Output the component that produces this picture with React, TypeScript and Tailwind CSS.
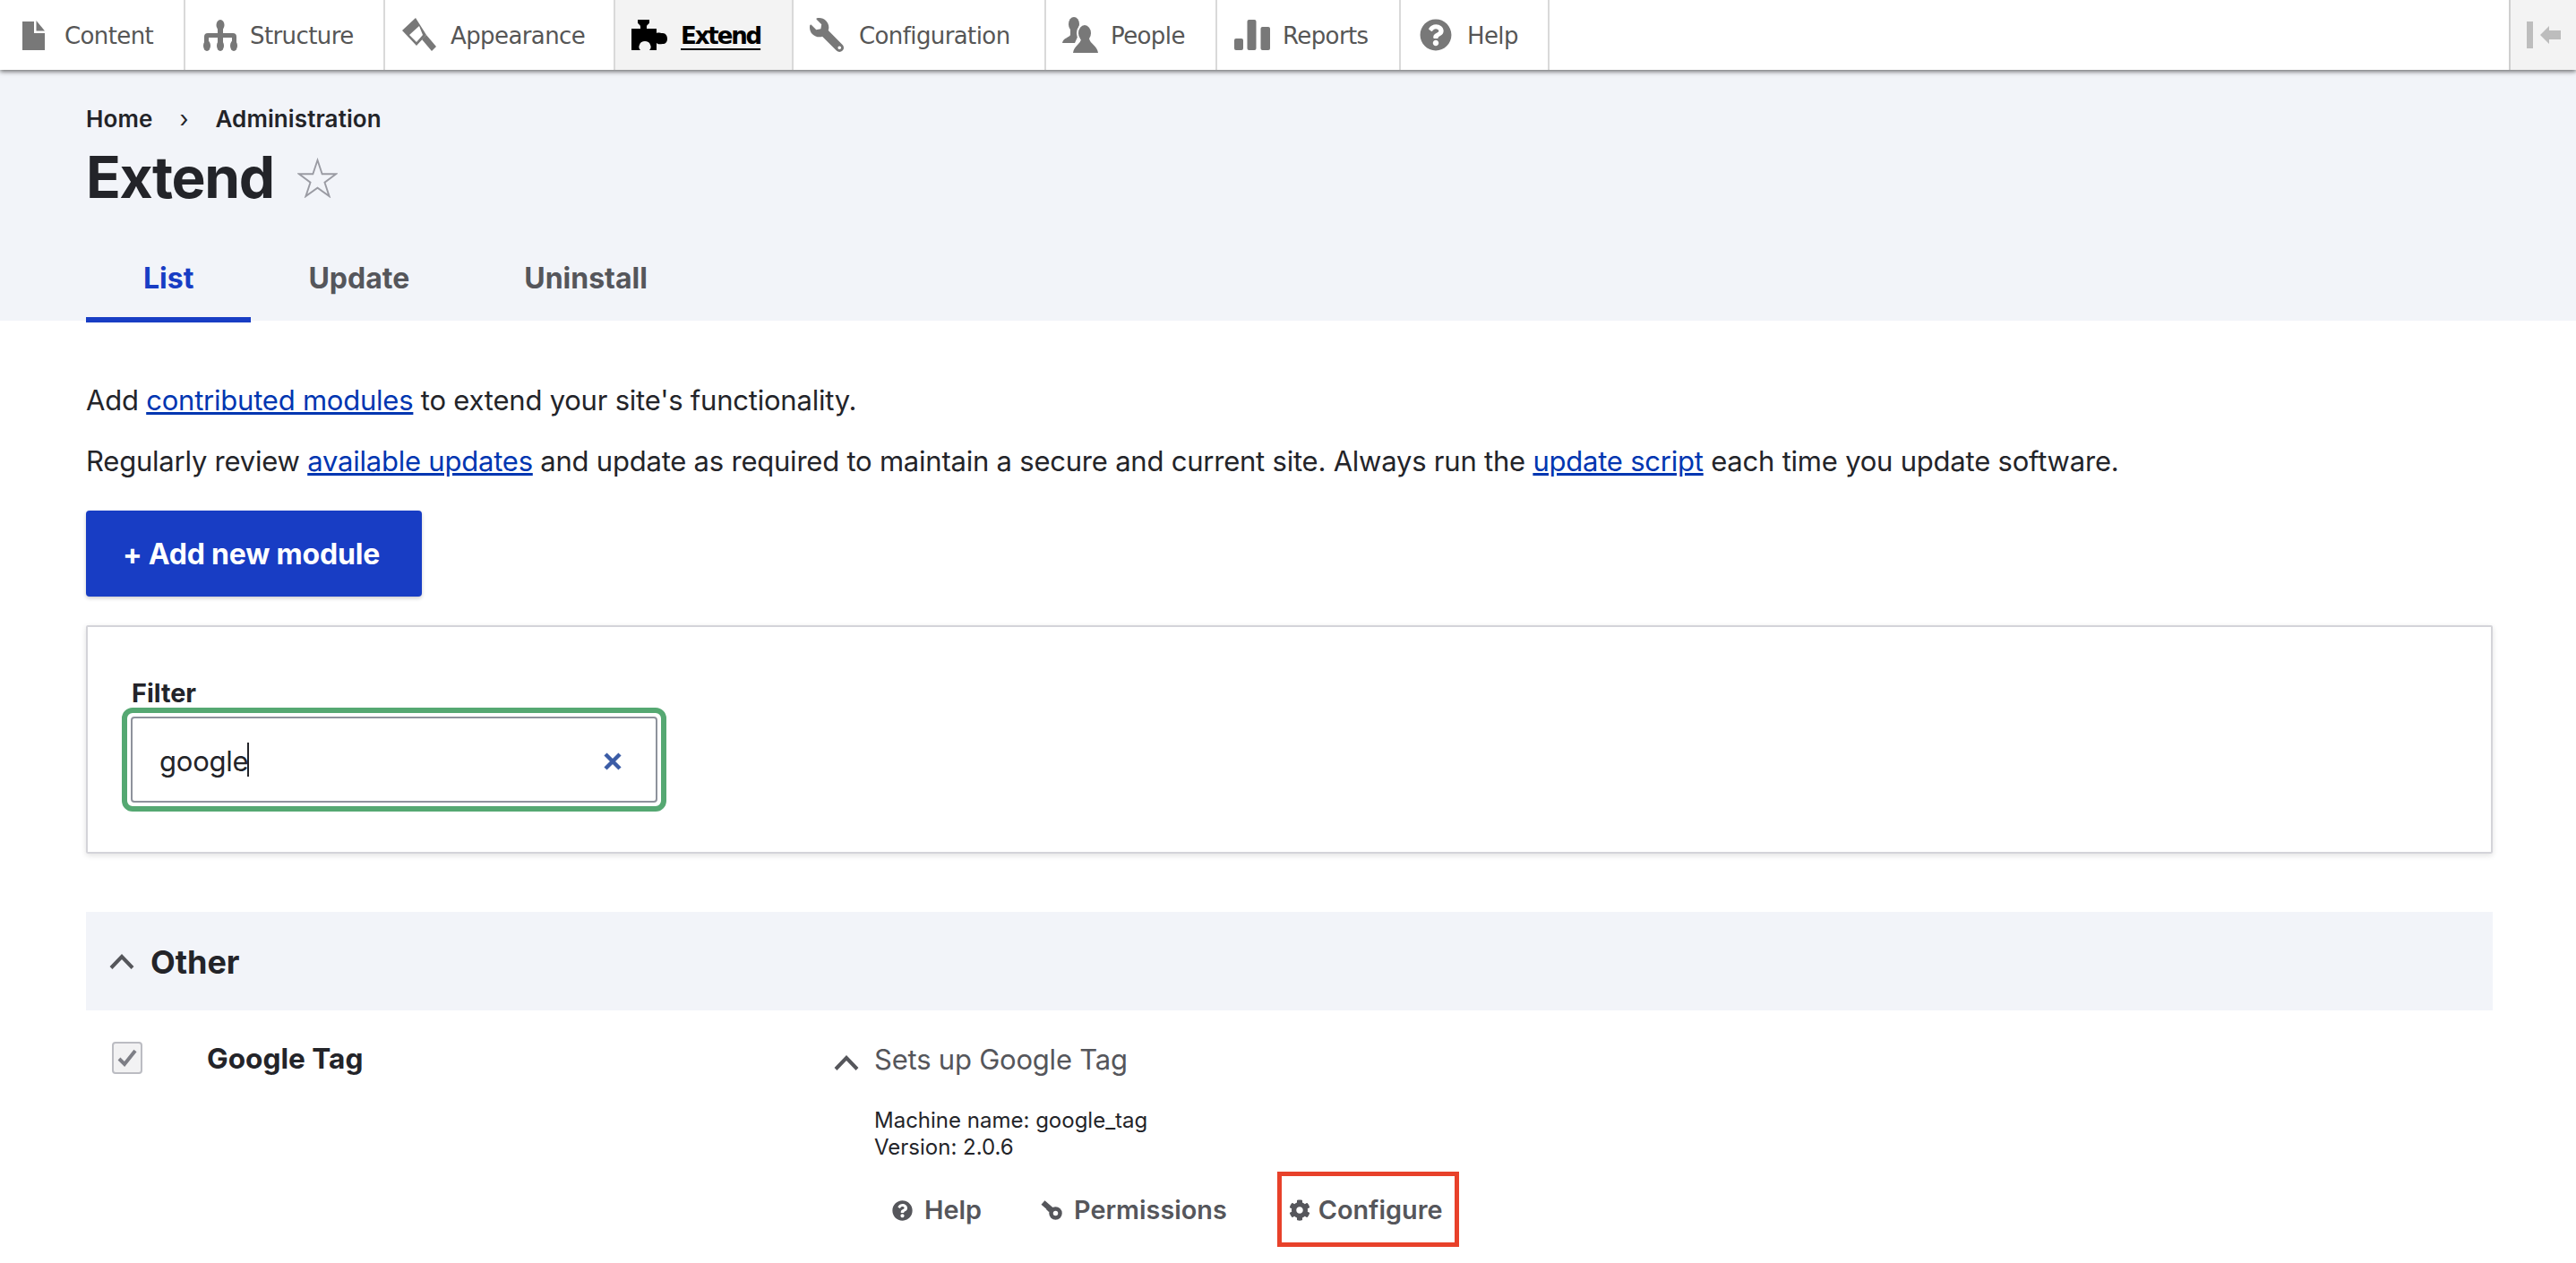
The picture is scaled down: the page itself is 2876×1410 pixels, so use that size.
import React from "react";
import { FaQuestionCircle, FaWrench, FaCog } from "react-icons/fa";

const FileIcon = () => (
  <svg width="25" height="33" viewBox="0 0 25 33" fill="#787878"><path d="M0 1h13v13h12v19H0z" /><path d="M15.500 0L25 11.500h-9.500z" /></svg>
);
const TreeIcon = () => (
  <svg width="38" height="35" viewBox="0 0 38 35" fill="#787878">
    <ellipse cx="19" cy="6" rx="4.500" ry="6" />
    <rect x="16" y="6" width="6" height="12" />
    <path d="M5 15h28a4 4 0 0 1 4 4v7h-5v-6h-10v6h-6v-6H6v6H1v-7a4 4 0 0 1 4-4z" />
    <ellipse cx="4" cy="29" rx="4" ry="6" />
    <ellipse cx="19" cy="29" rx="4" ry="6" />
    <ellipse cx="34" cy="29" rx="4" ry="6" />
  </svg>
);
const BrushIcon = () => (
  <svg width="38" height="38" viewBox="0 0 38 38" fill="#787878">
    <path fillRule="evenodd" d="M15 0L0 14l16 17 11-12zM19 9L8 19l8 8 7-8z" />
    <path d="M22 24l5-5 11 13-5 5z" />
  </svg>
);
const PuzzleIcon = () => (
  <svg width="40" height="34" viewBox="0 0 40 34" fill="#000">
    <path d="M7 0H20V3C20 5 17 5 17 8V10H28V15C30 14 32 15 35 15C38 15 40 18 40 21C40 25 38 27 35 27C32 27 30 28 28 26V34H20C22 32 22 30 21 28C20 25 18 24 15 24C12 24 10 25 9 28C8 30 8 32 10 34H0V10H10V8C10 5 7 5 7 3Z" />
  </svg>
);
const PeopleIcon = () => (
  <svg width="40" height="40" viewBox="0 0 40 40" fill="#787878">
    <ellipse cx="13" cy="8" rx="6" ry="8" />
    <path d="M9 14v6c-1 3-8 3-9 9h14l4-9v-6z" />
    <ellipse cx="25" cy="18" rx="9" ry="11" fill="#fff" />
    <ellipse cx="25" cy="18" rx="7" ry="9" />
    <path d="M21 24c0 6-8 8-9 16h28c-1-8-9-10-10-16z" />
  </svg>
);
const BarsIcon = () => (
  <svg width="40" height="34" viewBox="0 0 40 34" fill="#787878">
    <rect x="0" y="21" width="10" height="13" rx="2" />
    <rect x="14.500" y="0" width="10" height="34" rx="2" />
    <rect x="29.500" y="8" width="10.500" height="26" rx="2" />
  </svg>
);
const KeyIcon = () => (
  <svg width="24" height="22" viewBox="0 0 24 22" fill="none">
    <path d="M2.500 2.500L14 12.500" stroke="#55565b" strokeWidth="6" />
    <path d="M6 10l3-3 3 3-3 3z" fill="#55565b" />
    <circle cx="16.500" cy="14.500" r="5" stroke="#55565b" strokeWidth="4.500" />
  </svg>
);
const Chevron = ({ className }: { className?: string }) => (
  <svg className={className} width="28" height="17" viewBox="0 0 28 17" fill="none" stroke="#55565b" strokeWidth="4"><path d="M2 15.500L14 3l12 12.500" /></svg>
);

type It = { w: string; pl: string; gap: string; label: string; icon: React.ReactNode };
const navItems: It[] = [
  { w: "w-[207px]", pl: "pl-[25px]", gap: "gap-[22px]", label: "Content", icon: <FileIcon /> },
  { w: "w-[223px]", pl: "pl-[20px]", gap: "gap-[14px]", label: "Structure", icon: <TreeIcon /> },
  { w: "w-[257px]", pl: "pl-[19px]", gap: "gap-[16px]", label: "Appearance", icon: <BrushIcon /> },
];
const navItems2: It[] = [
  { w: "w-[282px]", pl: "pl-[18px]", gap: "gap-[17px]", label: "Configuration", icon: <FaWrench className="-scale-x-100 text-[38px] text-[#787878]" /> },
  { w: "w-[191px]", pl: "pl-[18px]", gap: "gap-[14px]", label: "People", icon: <PeopleIcon /> },
  { w: "w-[205px]", pl: "pl-[19px]", gap: "gap-[14px]", label: "Reports", icon: <BarsIcon /> },
  { w: "w-[166px]", pl: "pl-[21px]", gap: "gap-[17px]", label: "Help", icon: <FaQuestionCircle className="text-[36px] text-[#787878]" /> },
];

function Item({ it }: { it: It }) {
  return (
    <a className={`flex h-full items-center border-r-2 border-[#d9d9d9] text-[26px] text-[#565656] ${it.w} ${it.pl} ${it.gap}`}>
      {it.icon}
      <span className="pt-[2px] font-['DejaVu_Sans',sans-serif] tracking-[-0.6px]">{it.label}</span>
    </a>
  );
}

export default function App() {
  return (
    <div className="h-[1410px] w-[2876px] overflow-hidden bg-white font-['Inter',sans-serif] text-[#232429]">
      <nav className="relative z-10 flex h-[78px] items-stretch bg-white shadow-[0_2px_5px_rgba(0,0,0,0.55)]">
        {navItems.map((it) => <Item key={it.label} it={it} />)}
        <a className="flex h-full w-[199px] items-center gap-[15px] border-r-2 border-[#d9d9d9] bg-[#f3f3f3] pl-[18px] text-[26px] font-bold text-black underline underline-offset-[5px]">
          <PuzzleIcon />
          <span className="pt-[2px] font-['DejaVu_Sans',sans-serif] tracking-[-2.1px]">Extend</span>
        </a>
        {navItems2.map((it) => <Item key={it.label} it={it} />)}
        <div className="ml-auto flex w-[75px] items-center gap-[8px] border-l-2 border-[#cfcfcf] bg-[#f3f3f3] pl-[18px]">
          <div className="h-[30px] w-[7px] bg-[#bdbdbd]" />
          <svg width="23" height="20" viewBox="0 0 23 20" fill="#bdbdbd"><path d="M0 10L10 0v5h13v10H10v5z" /></svg>
        </div>
      </nav>

      <header className="h-[280px] bg-[#f2f4f9] pl-[96px]">
        <div className="flex items-center pt-[41px] text-[26px] font-semibold leading-[28px] tracking-[0.1px]">
          <span>Home</span>
          <span className="mx-[30px] text-[26px] font-normal">›</span>
          <span>Administration</span>
        </div>
        <div className="mt-[15px] flex h-[72px] items-center gap-[26px]">
          <h1 className="text-[64px] font-bold leading-[72px] tracking-[-1.4px]">Extend</h1>
          <svg width="45" height="45" viewBox="0 0 48 48" fill="none" stroke="#9a9ba3" strokeWidth="2"><path d="M24 3l5.500 16.500H46L32.500 29.500 38 46 24 36 10 46l5.500-16.500L2 19.500h16.500z" /></svg>
        </div>
        <div className="mt-[34px] flex h-[92px] text-[32px] font-bold text-[#55565b]">
          <a className="flex h-full items-center border-b-[6px] border-[#183dc4] px-[64px] text-[#183dc4]">List</a>
          <a className="flex h-full items-center px-[64px] pb-[6px]">Update</a>
          <a className="flex h-full items-center px-[64px] pb-[6px]">Uninstall</a>
        </div>
      </header>

      <main className="pl-[96px] pr-[93px] text-[31px] tracking-[-0.22px]">
        <p className="mt-[69px] leading-[40px]">Add <a className="text-[#0036b1] underline">contributed modules</a> to extend your site's functionality.</p>
        <p className="mt-[28px] leading-[40px]">Regularly review <a className="text-[#0036b1] underline">available updates</a> and update as required to maintain a secure and current site. Always run the <a className="text-[#0036b1] underline">update script</a> each time you update software.</p>
        <a className="mt-[35px] flex h-[96px] w-[375px] items-center justify-center rounded-[4px] bg-[#183dc4] pr-[6px] pt-[2px] text-[32px] font-bold tracking-[-0.2px] text-white shadow-[0_2px_4px_rgba(0,0,0,0.2)]">+ Add new module</a>

        <section className="mt-[32px] h-[255px] rounded-[2px] border-2 border-[#d4d4d9] pl-[49px] pt-[58px] shadow-[0_2px_6px_rgba(0,0,0,0.12)]">
          <label className="block text-[28.8px] font-bold leading-[32px] tracking-normal">Filter</label>
          <div className="-ml-[11px] flex h-[116px] w-[608px] items-center rounded-[12px] border-[6px] border-[#55a872] bg-white p-[4px]">
            <div className="flex h-full w-full items-center justify-between rounded-[4px] border-2 border-[#8e929c] pl-[30px] pr-[38px]">
              <span className="flex h-[38px] items-center leading-[38px]"><span className="pt-[3px]">google</span><span className="ml-[-1px] inline-block h-[38px] w-[2px] bg-[#232429]" /></span>
              <svg className="mt-[3px]" width="20" height="20" viewBox="0 0 20 20" fill="none" stroke="#3b5ca6" strokeWidth="4.500"><path d="M2 2l16 16M18 2L2 18" /></svg>
            </div>
          </div>
        </section>

        <section className="mt-[65px]">
          <div className="flex h-[110px] items-center gap-[18px] bg-[#f2f4f9] pl-[26px] text-[36px] font-bold tracking-normal">
            <Chevron />
            <h2 className="pt-[2px]">Other</h2>
          </div>
          <div className="flex items-start pl-[29px] pt-[35px]">
            <div className="flex h-[36px] w-[34px] items-center justify-center rounded-[4px] border-2 border-[#bbbcc2] bg-[#f2f2f3]">
              <svg width="22" height="20" viewBox="0 0 22 20" fill="none" stroke="#7d7e85" strokeWidth="4"><path d="M2 11l6 6L20 2" /></svg>
            </div>
            <div className="ml-[72px] w-[700px] pt-[1px] text-[31.6px] font-bold leading-[36px] tracking-normal">Google Tag</div>
            <div>
              <div className="flex items-center gap-[17px] leading-[36px] text-[#55565b]">
                <Chevron className="mt-[8px]" />
                <span className="pt-[2px]">Sets up Google Tag</span>
              </div>
              <div className="ml-[45px] mt-[35px] text-[24px] leading-[30px] tracking-normal">
                <div>Machine name: google_tag</div>
                <div>Version: 2.0.6</div>
              </div>
              <div className="ml-[65px] mt-[12px] flex items-center text-[28.8px] font-semibold leading-[36px] tracking-normal text-[#55565b]">
                <a className="flex items-center gap-[13px] pt-[2px]"><FaQuestionCircle className="text-[23px]" />Help</a>
                <a className="ml-[66px] flex items-center gap-[13px] pt-[2px]"><KeyIcon />Permissions</a>
                <a className="ml-[56px] flex h-[84px] w-[203px] items-center gap-[9px] border-[5px] border-[#e8412a] pl-[8px] pt-[2px]"><FaCog className="text-[24px]" />Configure</a>
              </div>
            </div>
          </div>
        </section>
      </main>
    </div>
  );
}
